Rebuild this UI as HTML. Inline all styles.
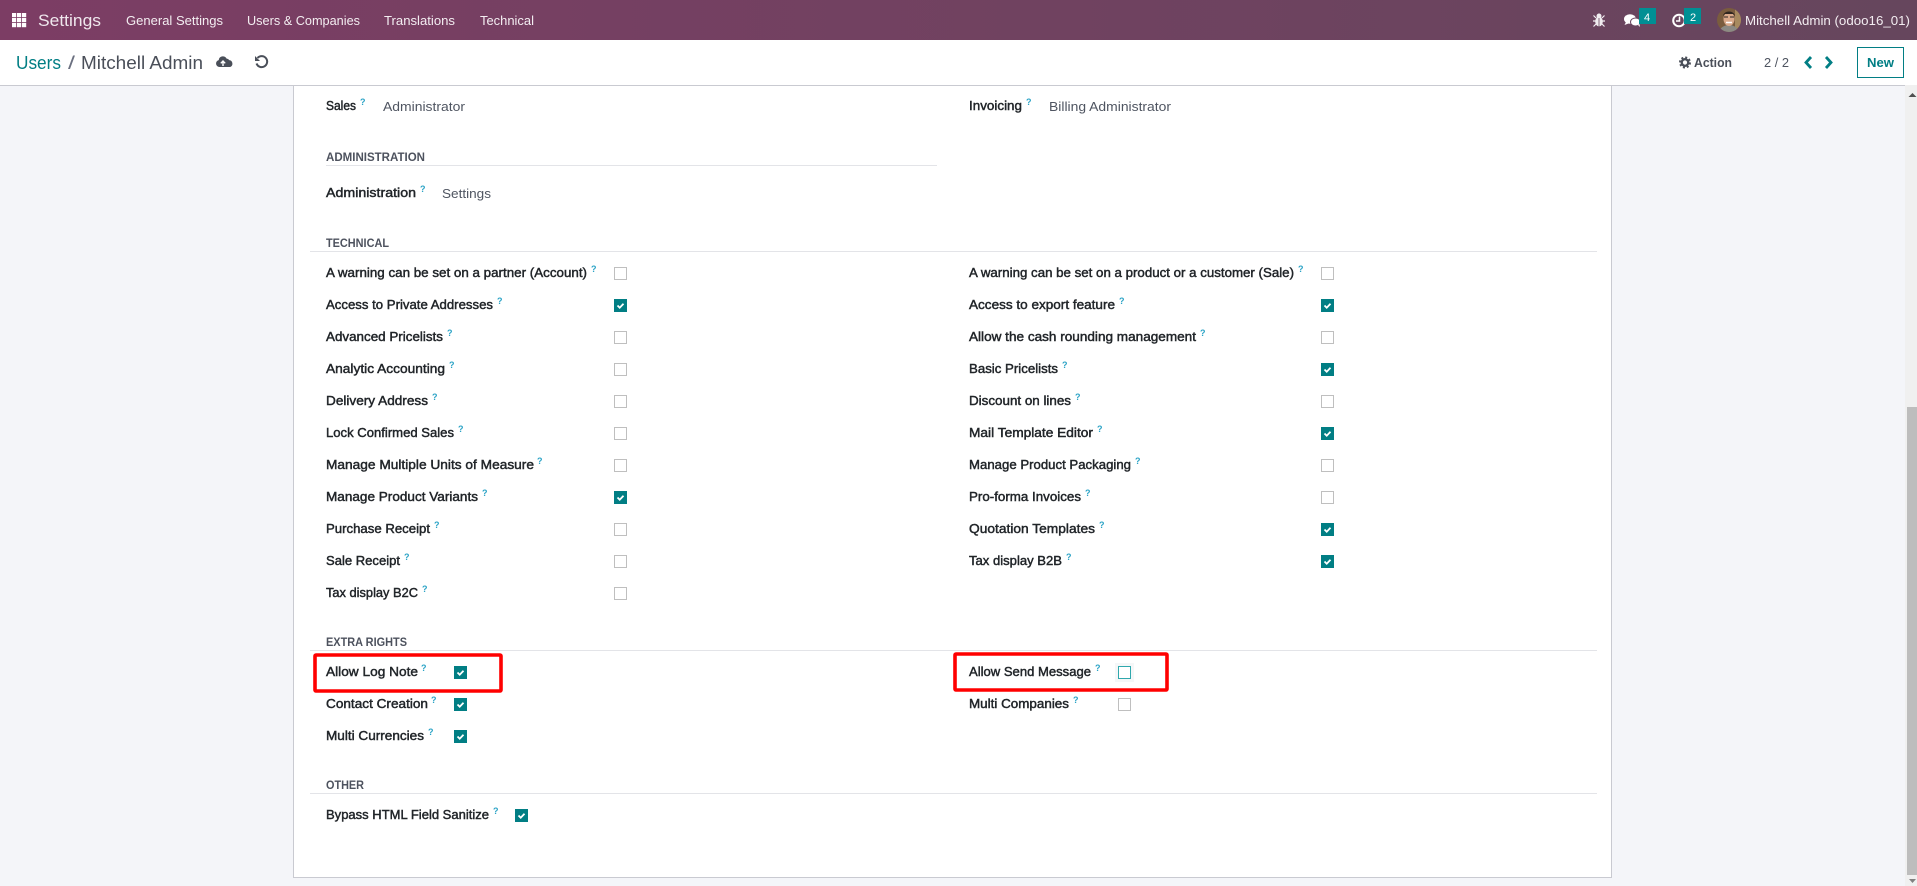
<!DOCTYPE html>
<html lang="en"><head><meta charset="utf-8"><title>Users / Mitchell Admin</title>
<style>
html,body{margin:0;padding:0;width:1917px;height:886px;overflow:hidden;background:#f4f5f9}
svg{display:block;font-family:"Liberation Sans",Arial,sans-serif}
text{white-space:pre}
.n{font-size:13px;fill:#f3edf1}
.l{font-size:13px;fill:#212529;stroke:#212529;stroke-width:.45px}
.v{font-size:13px;fill:#4f5561}
.h{font-size:12px;font-weight:bold;fill:#4d525e}
.q{font-size:9px;font-weight:bold;fill:#2ba3c6}
.u{fill:#fff;stroke:#bfbfbf}
.c{fill:#017e84}
.k{fill:none;stroke:#fff;stroke-width:1.8}
</style></head><body>
<svg width="1917" height="886" viewBox="0 0 1917 886" xmlns="http://www.w3.org/2000/svg">
<defs><linearGradient id="g" x1="0" x2="1" y1="0" y2="0"><stop offset="0" stop-color="#7c3d64"/><stop offset="1" stop-color="#66465d"/></linearGradient>
<clipPath id="av"><circle cx="1729" cy="20" r="12"/></clipPath></defs>
<rect width="1917" height="886" fill="#f4f5f9"/>
<!-- sheet -->
<rect x="293.5" y="80" width="1318" height="797.5" fill="#fff" stroke="#c9cad1"/>
<!-- scrollbar -->
<rect x="1905" y="85" width="12" height="801" fill="#f0f0f0"/>
<rect x="1907" y="407" width="10" height="468" fill="#bdbdbd"/>
<path d="M1908.500 97l4-4 4 4z" fill="#505050"/>
<path d="M1909 879h7l-3.500 4z" fill="#808080"/>
<!-- navbar -->
<rect width="1917" height="40" fill="url(#g)"/>
<g fill="#fff"><rect x="12" y="13" width="4.200" height="4.200"/><rect x="17" y="13" width="4.200" height="4.200"/><rect x="22" y="13" width="4.200" height="4.200"/><rect x="12" y="18" width="4.200" height="4.200"/><rect x="17" y="18" width="4.200" height="4.200"/><rect x="22" y="18" width="4.200" height="4.200"/><rect x="12" y="23" width="4.200" height="4.200"/><rect x="17" y="23" width="4.200" height="4.200"/><rect x="22" y="23" width="4.200" height="4.200"/></g>
<text x="38" y="26" font-size="17" fill="#efe7ed" textLength="63" lengthAdjust="spacingAndGlyphs">Settings</text>
<text class="n" x="126" y="25" textLength="97" lengthAdjust="spacingAndGlyphs">General Settings</text>
<text class="n" x="247" y="25" textLength="113" lengthAdjust="spacingAndGlyphs">Users &amp; Companies</text>
<text class="n" x="384" y="25" textLength="71" lengthAdjust="spacingAndGlyphs">Translations</text>
<text class="n" x="480" y="25" textLength="54" lengthAdjust="spacingAndGlyphs">Technical</text>
<!-- bug -->
<g fill="#f1edf0" stroke="#f1edf0"><ellipse cx="1599" cy="21.500" rx="3.800" ry="5" stroke="none"/><circle cx="1599" cy="16" r="2.500" stroke="none"/><path d="M1593.500 15.500l2.500 2.500M1604.500 15.500l-2.500 2.500M1593 21h3M1605 21h-3M1593.500 26.500l2.500-2.500M1604.500 26.500l-2.500-2.500" fill="none" stroke-width="1.200"/></g><path d="M1599 18v9" stroke="#66465d" stroke-width=".8"/>
<!-- chat -->
<ellipse cx="1630" cy="19" rx="6" ry="4.800" fill="#fff"/><path d="M1626 22l-1.500 3 4-1.500z" fill="#fff"/>
<ellipse cx="1635.500" cy="22" rx="5" ry="4" fill="#fff" stroke="#68465f"/><path d="M1638 25l2 2-.500-3z" fill="#fff"/>
<rect x="1639" y="8" width="17" height="16" fill="#008f94"/>
<text x="1644" y="21" font-size="11" fill="#fff">4</text>
<!-- clock -->
<circle cx="1679" cy="20.500" r="5.800" fill="none" stroke="#fff" stroke-width="2"/><path d="M1679.500 16.500v4.500h-3.500" fill="none" stroke="#fff" stroke-width="1.500"/>
<rect x="1684" y="8" width="17" height="16" fill="#008f94"/>
<text x="1690" y="21" font-size="11" fill="#fff">2</text>
<!-- avatar -->
<g clip-path="url(#av)"><rect x="1717" y="8" width="24" height="24" fill="#7a5c3e"/><rect x="1735" y="8" width="6" height="24" fill="#a78a5f"/><path d="M1719 33a10 8 0 0 1 20 0z" fill="#8c8a84"/><ellipse cx="1729" cy="19" rx="5.500" ry="7" fill="#d9a98a"/><path d="M1723 16c1-6 11-6 12 0l-2-2h-8z" fill="#2f2620"/><path d="M1724 17h4M1730 17h4" stroke="#2b2522" stroke-width="1"/><path d="M1726 22.500h6" stroke="#fff" stroke-width="1.400"/></g>
<text class="n" x="1745" y="25" textLength="165" lengthAdjust="spacingAndGlyphs">Mitchell Admin (odoo16_01)</text>
<!-- control panel -->
<rect y="40" width="1917" height="45" fill="#fff"/>
<rect y="85" width="1905" height="1" fill="#c9cad1"/>
<text x="16" y="69" font-size="18" fill="#017e84" textLength="45" lengthAdjust="spacingAndGlyphs">Users</text>
<text x="68" y="69" font-size="18" fill="#6b7080" textLength="7" lengthAdjust="spacingAndGlyphs">/</text>
<text x="81" y="69" font-size="18" fill="#4a4f59" textLength="122" lengthAdjust="spacingAndGlyphs">Mitchell Admin</text>
<!-- cloud upload -->
<path d="M219.500 67a3.500 3.500 0 0 1-.8-6.900 4.200 4.200 0 0 1 7.900-1.500 3.200 3.200 0 0 1 2.600 1.500 3.600 3.600 0 0 1 1 6.900z" fill="#4a4f59"/><path d="M223 66v-4.500M220.800 63.300l2.200-2.300 2.200 2.300" fill="none" stroke="#fff" stroke-width="1.400"/>
<!-- undo -->
<path d="M257.500 58a5.500 5.500 0 1 1-1 5.500" fill="none" stroke="#4a4f59" stroke-width="2"/><path d="M255 56v5h5z" fill="#4a4f59"/>
<!-- action -->
<circle cx="1685" cy="62.500" r="3.300" fill="none" stroke="#4a4f59" stroke-width="2.400"/><circle cx="1685" cy="62.500" r="5" fill="none" stroke="#4a4f59" stroke-width="2" stroke-dasharray="2 1.930"/>
<text x="1694" y="67" font-size="13" font-weight="bold" fill="#4a4f59" textLength="38" lengthAdjust="spacingAndGlyphs">Action</text>
<text x="1764" y="67" font-size="13" fill="#4f5561" textLength="25" lengthAdjust="spacingAndGlyphs">2 / 2</text>
<path d="M1811 57l-5 5.500 5 5.500" fill="none" stroke="#017e84" stroke-width="2.800"/>
<path d="M1826 57l5 5.500-5 5.500" fill="none" stroke="#017e84" stroke-width="2.800"/>
<rect x="1857.500" y="47.500" width="46" height="30" fill="#fff" stroke="#017e84"/>
<text x="1867" y="67" font-size="13" font-weight="bold" fill="#017e84" textLength="27" lengthAdjust="spacingAndGlyphs">New</text>

<!-- top fields -->
<text class="l" x="326" y="110" textLength="30" lengthAdjust="spacingAndGlyphs">Sales</text><text class="q" x="360" y="105">?</text>
<text class="v" x="383" y="111" textLength="82" lengthAdjust="spacingAndGlyphs">Administrator</text>
<text class="l" x="969" y="110" textLength="53" lengthAdjust="spacingAndGlyphs">Invoicing</text><text class="q" x="1026" y="105">?</text>
<text class="v" x="1049" y="111" textLength="122" lengthAdjust="spacingAndGlyphs">Billing Administrator</text>
<text class="h" x="326" y="161" textLength="99" lengthAdjust="spacingAndGlyphs">ADMINISTRATION</text>
<rect x="326" y="165" width="611" height="1" fill="#e3e4e8"/>
<text class="l" x="326" y="197" textLength="90" lengthAdjust="spacingAndGlyphs">Administration</text><text class="q" x="420" y="192">?</text>
<text class="v" x="442" y="198" textLength="49" lengthAdjust="spacingAndGlyphs">Settings</text>

<!-- technical -->
<text class="h" x="326" y="247" textLength="63" lengthAdjust="spacingAndGlyphs">TECHNICAL</text>
<rect x="310" y="251" width="1287" height="1" fill="#e3e4e8"/>

<text class="l" x="326" y="277" textLength="261" lengthAdjust="spacingAndGlyphs">A warning can be set on a partner (Account)</text><text class="q" x="591" y="272">?</text>
<rect class="u" x="614.500" y="267.500" width="12" height="12"/>
<text class="l" x="326" y="309" textLength="167" lengthAdjust="spacingAndGlyphs">Access to Private Addresses</text><text class="q" x="497" y="304">?</text>
<rect class="c" x="614" y="299" width="13" height="13"/><path class="k" d="M617.500 305.500l2.200 2.200 3.800-4"/>
<text class="l" x="326" y="341" textLength="117" lengthAdjust="spacingAndGlyphs">Advanced Pricelists</text><text class="q" x="447" y="336">?</text>
<rect class="u" x="614.500" y="331.500" width="12" height="12"/>
<text class="l" x="326" y="373" textLength="119" lengthAdjust="spacingAndGlyphs">Analytic Accounting</text><text class="q" x="449" y="368">?</text>
<rect class="u" x="614.500" y="363.500" width="12" height="12"/>
<text class="l" x="326" y="405" textLength="102" lengthAdjust="spacingAndGlyphs">Delivery Address</text><text class="q" x="432" y="400">?</text>
<rect class="u" x="614.500" y="395.500" width="12" height="12"/>
<text class="l" x="326" y="437" textLength="128" lengthAdjust="spacingAndGlyphs">Lock Confirmed Sales</text><text class="q" x="458" y="432">?</text>
<rect class="u" x="614.500" y="427.500" width="12" height="12"/>
<text class="l" x="326" y="469" textLength="208" lengthAdjust="spacingAndGlyphs">Manage Multiple Units of Measure</text><text class="q" x="537" y="464">?</text>
<rect class="u" x="614.500" y="459.500" width="12" height="12"/>
<text class="l" x="326" y="501" textLength="152" lengthAdjust="spacingAndGlyphs">Manage Product Variants</text><text class="q" x="482" y="496">?</text>
<rect class="c" x="614" y="491" width="13" height="13"/><path class="k" d="M617.500 497.500l2.200 2.200 3.800-4"/>
<text class="l" x="326" y="533" textLength="104" lengthAdjust="spacingAndGlyphs">Purchase Receipt</text><text class="q" x="434" y="528">?</text>
<rect class="u" x="614.500" y="523.500" width="12" height="12"/>
<text class="l" x="326" y="565" textLength="74" lengthAdjust="spacingAndGlyphs">Sale Receipt</text><text class="q" x="404" y="560">?</text>
<rect class="u" x="614.500" y="555.500" width="12" height="12"/>
<text class="l" x="326" y="597" textLength="92" lengthAdjust="spacingAndGlyphs">Tax display B2C</text><text class="q" x="422" y="592">?</text>
<rect class="u" x="614.500" y="587.500" width="12" height="12"/>

<text class="l" x="969" y="277" textLength="325" lengthAdjust="spacingAndGlyphs">A warning can be set on a product or a customer (Sale)</text><text class="q" x="1298" y="272">?</text>
<rect class="u" x="1321.500" y="267.500" width="12" height="12"/>
<text class="l" x="969" y="309" textLength="146" lengthAdjust="spacingAndGlyphs">Access to export feature</text><text class="q" x="1119" y="304">?</text>
<rect class="c" x="1321" y="299" width="13" height="13"/><path class="k" d="M1324.500 305.500l2.200 2.200 3.800-4"/>
<text class="l" x="969" y="341" textLength="227" lengthAdjust="spacingAndGlyphs">Allow the cash rounding management</text><text class="q" x="1200" y="336">?</text>
<rect class="u" x="1321.500" y="331.500" width="12" height="12"/>
<text class="l" x="969" y="373" textLength="89" lengthAdjust="spacingAndGlyphs">Basic Pricelists</text><text class="q" x="1062" y="368">?</text>
<rect class="c" x="1321" y="363" width="13" height="13"/><path class="k" d="M1324.500 369.500l2.200 2.200 3.800-4"/>
<text class="l" x="969" y="405" textLength="102" lengthAdjust="spacingAndGlyphs">Discount on lines</text><text class="q" x="1075" y="400">?</text>
<rect class="u" x="1321.500" y="395.500" width="12" height="12"/>
<text class="l" x="969" y="437" textLength="124" lengthAdjust="spacingAndGlyphs">Mail Template Editor</text><text class="q" x="1097" y="432">?</text>
<rect class="c" x="1321" y="427" width="13" height="13"/><path class="k" d="M1324.500 433.500l2.200 2.200 3.800-4"/>
<text class="l" x="969" y="469" textLength="162" lengthAdjust="spacingAndGlyphs">Manage Product Packaging</text><text class="q" x="1135" y="464">?</text>
<rect class="u" x="1321.500" y="459.500" width="12" height="12"/>
<text class="l" x="969" y="501" textLength="112" lengthAdjust="spacingAndGlyphs">Pro-forma Invoices</text><text class="q" x="1085" y="496">?</text>
<rect class="u" x="1321.500" y="491.500" width="12" height="12"/>
<text class="l" x="969" y="533" textLength="126" lengthAdjust="spacingAndGlyphs">Quotation Templates</text><text class="q" x="1099" y="528">?</text>
<rect class="c" x="1321" y="523" width="13" height="13"/><path class="k" d="M1324.500 529.500l2.200 2.200 3.800-4"/>
<text class="l" x="969" y="565" textLength="93" lengthAdjust="spacingAndGlyphs">Tax display B2B</text><text class="q" x="1066" y="560">?</text>
<rect class="c" x="1321" y="555" width="13" height="13"/><path class="k" d="M1324.500 561.500l2.200 2.200 3.800-4"/>

<!-- extra rights -->
<text class="h" x="326" y="646" textLength="81" lengthAdjust="spacingAndGlyphs">EXTRA RIGHTS</text>
<rect x="310" y="650" width="1287" height="1" fill="#e3e4e8"/>
<text class="l" x="326" y="676" textLength="92" lengthAdjust="spacingAndGlyphs">Allow Log Note</text><text class="q" x="421" y="671">?</text>
<rect class="c" x="454" y="666" width="13" height="13"/><path class="k" d="M457.500 672.500l2.200 2.200 3.800-4"/>
<text class="l" x="326" y="708" textLength="102" lengthAdjust="spacingAndGlyphs">Contact Creation</text><text class="q" x="431" y="703">?</text>
<rect class="c" x="454" y="698" width="13" height="13"/><path class="k" d="M457.500 704.500l2.200 2.200 3.800-4"/>
<text class="l" x="326" y="740" textLength="98" lengthAdjust="spacingAndGlyphs">Multi Currencies</text><text class="q" x="428" y="735">?</text>
<rect class="c" x="454" y="730" width="13" height="13"/><path class="k" d="M457.500 736.500l2.200 2.200 3.800-4"/>

<text class="l" x="969" y="676" textLength="122" lengthAdjust="spacingAndGlyphs">Allow Send Message</text><text class="q" x="1095" y="671">?</text>
<rect x="1115" y="663" width="19" height="19" fill="#f5f7f8"/>
<rect x="1118.500" y="666.500" width="12" height="12" fill="#fff" stroke="#2fa8ad"/>
<text class="l" x="969" y="708" textLength="100" lengthAdjust="spacingAndGlyphs">Multi Companies</text><text class="q" x="1073" y="703">?</text>
<rect class="u" x="1118.500" y="698.500" width="12" height="12"/>

<!-- other -->
<text class="h" x="326" y="789" textLength="38" lengthAdjust="spacingAndGlyphs">OTHER</text>
<rect x="310" y="793" width="1287" height="1" fill="#e3e4e8"/>
<text class="l" x="326" y="819" textLength="163" lengthAdjust="spacingAndGlyphs">Bypass HTML Field Sanitize</text><text class="q" x="493" y="814">?</text>
<rect class="c" x="515" y="809" width="13" height="13"/><path class="k" d="M518.500 815.500l2.200 2.200 3.800-4"/>

<!-- annotations -->
<rect x="315" y="655" width="186" height="36" rx="1" fill="none" stroke="#ff0000" stroke-width="3.600"/>
<rect x="955" y="654" width="212" height="36" rx="1" fill="none" stroke="#ff0000" stroke-width="3.600"/>
</svg>
</body></html>
